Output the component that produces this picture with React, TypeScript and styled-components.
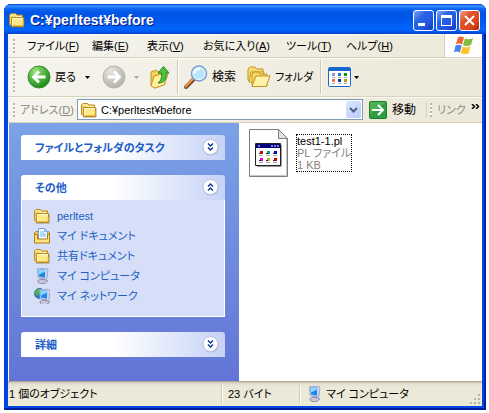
import React, { useState } from "react";
import styled, { createGlobalStyle } from "styled-components";

const GlobalStyle = createGlobalStyle`
  * { box-sizing: border-box; }
  body {
    margin: 0;
    background: #fff;
    color: #000;
    font: 11px/16px "Liberation Sans", "Noto Sans CJK JP", sans-serif;
    font-feature-settings: "palt";
  }
  button, input { font: inherit; font-feature-settings: inherit; color: inherit; }
  button { margin: 0; padding: 0; border: 0; background: none; white-space: nowrap; }
  svg { display: block; flex: none; }
`;

const Page = styled.div`
  display: flex;
  min-height: 100vh;
  padding: 4px 3px 3px 4px;
`;
const Window = styled.main`
  flex: 1;
  min-width: 0;
  display: flex;
  flex-direction: column;
  padding: 0 4px 4px;
  border-radius: 7px 7px 0 0;
  background: #0046e0;
  box-shadow: inset 1px 0 #0831d9, inset -2px -2px #001ea0;
`;
const TitleBar = styled.header`
  display: flex;
  align-items: center;
  gap: 5px;
  height: 30px;
  margin: 0 -4px;
  padding: 2px 6px 0 5px;
  border-radius: 7px 7px 0 0;
  background: linear-gradient(#0040cc 0, #3a92ff 2px, #0a62f0 5px, #0055e5 9px, #0058ee 17px, #0066ff 25px, #005cf5 27px, #0040c8 30px);
`;
const Title = styled.h1`
  flex: 1;
  margin: 0;
  color: #fff;
  font-size: 14px;
  line-height: 16px;
  text-shadow: 1px 1px #0a1883;
`;
const Captions = styled.div`
  display: flex;
  gap: 2px;
`;
const CaptionButton = styled.button<{ $close?: boolean }>`
  width: 21px;
  height: 21px;
  border: 1px solid #fff;
  border-radius: 3px;
  background: ${(p) =>
    p.$close
      ? "linear-gradient(135deg, #f0a58c, #e0512c 35%, #dc4a22 65%, #b42a08)"
      : "linear-gradient(135deg, #7ea6f8, #2a62e6 35%, #2458e0 65%, #1438b0)"};
`;
const Bar = styled.div<{ $height: number }>`
  display: flex;
  align-items: center;
  height: ${(p) => p.$height}px;
  padding-left: 5px;
  background: linear-gradient(90deg, #f5f4ee, #ece9d8);
  border-bottom: 1px solid #d8d2bd;
  box-shadow: inset 0 1px #fbfaf6;
  overflow: hidden;
`;
const Grip = styled.span<{ $height: number }>`
  flex: none;
  width: 2px;
  height: ${(p) => p.$height}px;
  background: repeating-linear-gradient(#bcb8a6 0 2px, #fbfaf6 2px 4px);
`;
const Menus = styled.nav`
  flex: 1;
  display: flex;
  gap: 16px;
  padding-left: 12px;
`;
const MenuButton = styled.button<{ $width: number }>`
  width: ${(p) => p.$width}px;
  text-align: left;
`;
const FlagBox = styled.div`
  display: flex;
  align-items: center;
  justify-content: center;
  width: 38px;
  height: 100%;
  background: #fff;
  border-left: 1px solid #d8d2bd;
`;
const ToolButton = styled.button<{ $gap: number; $left: number }>`
  display: flex;
  align-items: center;
  gap: ${(p) => p.$gap}px;
  margin-left: ${(p) => p.$left}px;
`;
const Separator = styled.span<{ $left: number }>`
  flex: none;
  width: 2px;
  height: 34px;
  margin-left: ${(p) => p.$left}px;
  border-left: 1px solid #cbc7b4;
  border-right: 1px solid #fff;
`;
const ToolText = styled.span<{ $width: number; $large?: boolean }>`
  width: ${(p) => p.$width}px;
  font-size: ${(p) => (p.$large ? 12 : 11)}px;
  text-align: left;
`;
const AddressLabel = styled.label`
  flex: none;
  width: 62px;
  padding-left: 5px;
  color: #8b897c;
  white-space: nowrap;
`;
const AddressField = styled.div`
  flex: 1;
  min-width: 0;
  display: flex;
  align-items: center;
  gap: 4px;
  height: 21px;
  padding: 0 1px 0 3px;
  border: 1px solid #7f9db9;
  background: #fff;
`;
const AddressInput = styled.input`
  flex: 1;
  min-width: 0;
  padding: 0;
  border: 0;
  outline: 0;
  background: none;
`;
const DropButton = styled.button`
  display: flex;
  align-items: center;
  justify-content: center;
  width: 15px;
  height: 17px;
  border-radius: 2px;
  background: linear-gradient(135deg, #dce6fe, #b6cbf8);
`;
const Links = styled.div`
  display: flex;
  align-items: center;
  gap: 5px;
  flex: none;
  width: 56px;
  margin-left: 10px;
  padding-left: 3px;
  border-left: 1px solid #d8d2bd;
  color: #8b897c;
  white-space: nowrap;
`;
const More = styled.button`
  margin: 0 4px 6px auto;
`;
const Content = styled.div`
  flex: 1;
  display: flex;
  border-left: 1px solid #fff;
  background: #fff;
`;
const Sidebar = styled.aside`
  flex: none;
  display: flex;
  flex-direction: column;
  gap: 15px;
  width: 230px;
  padding: 12px 14px 12px 12px;
  background: linear-gradient(#7ba2e7, #6375d6);
`;
const PanelHeader = styled.button`
  display: flex;
  align-items: center;
  justify-content: space-between;
  width: 100%;
  height: 25px;
  padding: 0 6px 0 14px;
  border-radius: 3px 3px 0 0;
  background: linear-gradient(90deg, #fff 45%, #c6d3f7);
  color: #215dc6;
  font-weight: bold;
`;
const PanelBody = styled.ul`
  margin: 0;
  padding: 6px 0 10px 12px;
  border: solid #fff;
  border-width: 0 1px 1px;
  background: #d6dff7;
  list-style: none;
`;
const TaskLink = styled.a`
  display: flex;
  align-items: center;
  gap: 7px;
  height: 20px;
  color: #215dc6;
  text-decoration: none;
  white-space: nowrap;
`;
const Files = styled.section`
  flex: 1;
  padding: 6px 10px;
`;
const FileItem = styled.button`
  display: flex;
  align-items: center;
  gap: 8px;
`;
const FileText = styled.span`
  display: block;
  border: 1px dotted #000;
  line-height: 12px;
  text-align: left;
`;
const FileLine = styled.span<{ $muted?: boolean }>`
  display: block;
  color: ${(p) => (p.$muted ? "#85837a" : "#000")};
`;
const StatusBar = styled.footer`
  display: flex;
  height: 25px;
  padding-top: 4px;
  background: linear-gradient(#8f8c7c 0, #c9c6b6 1px, #e4e1d0 3px, #ece9d8 6px);
`;
const StatusPane = styled.div<{ $width?: number; $first?: boolean }>`
  display: flex;
  align-items: center;
  gap: 4px;
  flex: ${(p) => (p.$width ? `0 0 ${p.$width}px` : "1")};
  height: 18px;
  padding-left: ${(p) => (p.$first ? 1 : 5)}px;
  border-right: ${(p) => (p.$width ? "1px solid #fff" : "0")};
  box-shadow: ${(p) => (p.$width ? "inset -1px 0 #cfcbb8" : "none")};
  white-space: nowrap;
`;
const SizeGrip = styled.span`
  display: flex;
  align-items: flex-end;
  padding: 0 1px 1px 0;
`;

const Folder = () => (
  <svg width="16" height="16" viewBox="0 0 16 16" aria-hidden="true">
    <path d="M2 15.2h13l.8-.8V6" fill="none" stroke="#77705c" strokeOpacity=".5" />
    <path d="M.5 12.5V3L2 1.500h4.500L8 3h5.500v10H1z" fill="#f7d567" stroke="#b98a1d" />
    <path d="M2 3h4l1 1.500h5.500" fill="none" stroke="#fff6bf" />
    <path d="M2.500 5.500h12v9h-12z" fill="#ffe88a" stroke="#b98a1d" />
    <path d="M3.500 6.500h10.500M3.500 7v6" fill="none" stroke="#fffbd9" />
    <path d="M4 13.500h10V9" fill="none" stroke="#eebf47" />
  </svg>
);
const Documents = () => (
  <svg width="16" height="16" viewBox="0 0 16 16" aria-hidden="true">
    <path d="M.5 14.500V5L2 3.500h12.500l1 1.500v9.500z" fill="#f0c251" stroke="#ad7d18" />
    <path d="M4.500.500h6l3 3v9h-9z" fill="#f8fcff" stroke="#6ba2d6" />
    <path d="M10.500.500v3h3M6 4h4M6 6h6M6 8h6" fill="none" stroke="#73b4e8" />
    <path d="M.5 15V6.500h3V11h10V6.500h2V15z" fill="#ffe282" stroke="#ad7d18" />
  </svg>
);
const Monitor = ({ x = 0, y = 0 }: { x?: number; y?: number }) => (
  <g transform={`translate(${x} ${y})`}>
    <path d="M3 12.500 6 11l6 1 .5 1.500-3 2H5L3 14z" fill="#c8c6dc" stroke="#77758f" strokeWidth=".7" />
    <path d="m5 9.500 5 1v2l-4-1z" fill="#9290b5" />
    <path d="m2.500.800 8-.5 2.500 1-1 9-1.500 1L3 9.500z" fill="#d0d7ee" stroke="#8b93bb" strokeWidth=".7" />
    <path d="m3.200 1.700 7-.5-.2 8.500-6-1.300z" fill="#1d88e8" />
    <path d="m3.200 1.700 7-.5V4C7.500 4 6.500 5.500 4 6.500z" fill="#8dd6ff" />
  </g>
);
const Computer = () => (
  <svg width="16" height="16" viewBox="0 0 16 16" aria-hidden="true"><Monitor x={1} /></svg>
);
const Network = () => (
  <svg width="16" height="16" viewBox="0 0 16 16" aria-hidden="true">
    <circle cx="5.500" cy="5.500" r="5" fill="#2679cf" stroke="#19558f" strokeWidth=".7" />
    <path d="M1.500 3 4 1l4 .5-1 2-2 .5L4.500 7 2 7.500.8 5z" fill="#55b83c" />
    <Monitor x={3} y={1} />
  </svg>
);
const Flag = () => (
  <svg width="20" height="19" viewBox="0 0 20 19" aria-hidden="true">
    <path d="M4 1.500C6-.3 8 .4 10 1.500L8 8.600C6 7.200 4 7.200 1.800 8.400z" fill="#f26532" />
    <path d="M11 2.200c2 1.100 5 1.500 8-.2l-2 7c-3 1.300-6 1.200-8-.1z" fill="#80bd3f" />
    <path d="M1.500 9.600c2.500-1.200 4.500-1.100 6.200.2L5.800 16.500C4 15.200 2 15.300 0 16.300z" fill="#4d82e5" />
    <path d="M8.700 10.400c2.500 1.200 5 1.300 8-.1l-2 7c-3 1.300-6 1.300-8-.2z" fill="#fcc32b" />
  </svg>
);
const Arrow = ({ faded }: { faded?: boolean }) => (
  <svg width="5" height="3" viewBox="0 0 5 3" aria-hidden="true">
    <path d="M0 0h5L2.500 3z" fill={faded ? "#aaa89d" : "#000"} />
  </svg>
);
const RoundArrow = ({ forward }: { forward?: boolean }) => (
  <svg width="24" height="24" viewBox="0 0 24 24" aria-hidden="true">
    <defs>
      <radialGradient id={forward ? "gray" : "green"} cx=".35" cy=".25" r=".85">
        <stop offset="0" stopColor={forward ? "#e6e5e0" : "#a4e183"} />
        <stop offset=".5" stopColor={forward ? "#c8c7c1" : "#4cb43c"} />
        <stop offset="1" stopColor={forward ? "#b0afa9" : "#177a18"} />
      </radialGradient>
    </defs>
    <circle cx="12" cy="12" r="11" fill={`url(#${forward ? "gray" : "green"})`} stroke={forward ? "#b5b4ad" : "#368f2d"} />
    <path d={forward ? "M5.500 12H17M12 6.500l5.500 5.500-5.500 5.500" : "M18.500 12H7M12 6.500 6.500 12l5.500 5.500"} fill="none" stroke="#fff" strokeWidth="2.800" />
  </svg>
);
const UpFolder = () => (
  <svg width="20" height="24" viewBox="0 0 20 24" aria-hidden="true">
    <path d="M1 20V7l5-2 2 2 6-1 1 13-10 4z" fill="#f5d15c" stroke="#c39421" />
    <path d="m1 21 3-10 11-3 3 1-4 11-9 3z" fill="#ffef9e" stroke="#c39421" />
    <path d="M8 18c3-2 4-5 3.500-10H8l5.500-6.500L19 8h-3c1 6-2 10-8 10z" fill="#4fc43e" stroke="#238424" />
  </svg>
);
const Search = () => (
  <svg width="24" height="24" viewBox="0 0 24 24" aria-hidden="true">
    <path d="M10 14 2 22" stroke="#7c4b25" strokeWidth="4" strokeLinecap="round" />
    <path d="m9.500 13.500-8 8" stroke="#e99b58" strokeWidth="2" strokeLinecap="round" />
    <circle cx="15" cy="8.500" r="7.500" fill="#cceeff" stroke="#769cd6" strokeWidth="1.500" />
    <circle cx="15" cy="8.500" r="6" fill="#b9e5fb" stroke="#eefaff" />
    <path d="M11 8c0-3 2-4 5-4" fill="none" stroke="#fff" strokeWidth="2" />
  </svg>
);
const Folders = () => (
  <svg width="24" height="22" viewBox="0 0 24 22" aria-hidden="true">
    <path d="M1 14V3l2-2h5l2 2h6v12H2z" fill="#f9db70" stroke="#c59422" />
    <path d="m2 16 2-10h13l-3 10z" fill="#ffeb91" stroke="#c59422" />
    <path d="M5 19V8l2-2h5l1 2h7v12H6z" fill="#f9d763" stroke="#c59422" />
    <path d="m5 20.500 4-10.500h14l-4 10.500H6z" fill="#fff2a9" stroke="#c59422" />
  </svg>
);
const Views = () => (
  <svg width="23" height="20" viewBox="0 0 23 20" aria-hidden="true">
    <rect x=".5" y=".5" width="22" height="19" rx="1" fill="#fff" stroke="#1765cd" />
    <path d="M1 1h21v3H1z" fill="#1765cd" />
    {["#a090ca", "#2479db", "#079b0b", "#fa7546", "#073b9b", "#c39b00"].map((color, i) => (
      <g key={color} fill={color}>
        <rect x={4 + (i % 3) * 6} y={i < 3 ? 6 : 12} width="3" height="3" />
        <rect x={4 + (i % 3) * 6} y={i < 3 ? 10 : 16} width="3" height="1" fill="#aaa" />
      </g>
    ))}
  </svg>
);
const Go = () => (
  <svg width="18" height="18" viewBox="0 0 18 18" aria-hidden="true">
    <rect x=".5" y=".5" width="17" height="17" rx="1" fill="#2f9e3f" stroke="#1d7b2e" />
    <path d="M1 1h16L1 13z" fill="#70c26a" opacity=".5" />
    <path d="M3 9h11M9 4l5 5-5 5" fill="none" stroke="#fff" strokeWidth="2" />
  </svg>
);
const Chevrons = ({ open }: { open?: boolean }) => (
  <svg width="17" height="17" viewBox="0 0 17 17" aria-hidden="true">
    <circle cx="9" cy="9" r="7.500" fill="#909cc5" opacity=".6" />
    <circle cx="8.500" cy="8" r="7.500" fill="#fff" stroke="#b6bfdc" />
    <path d={open ? "m6 7.500 2.500-2.500L11 7.500m-5 4L8.500 9l2.500 2.500" : "M6 4.500 8.500 7 11 4.500m-5 4L8.500 11 11 8.500"} fill="none" stroke="#103995" strokeWidth="1.500" />
  </svg>
);
const ScriptFile = () => (
  <svg width="39" height="48" viewBox="0 0 39 48" aria-hidden="true">
    <path d="M.5.500h29l9 9v38H.500z" fill="#fff" stroke="#7e7e7e" />
    <path d="M37.500 10v36.500H1" fill="none" stroke="#c6c6c6" />
    <path d="M29.500.500v9h9z" fill="#e2e2e2" stroke="#7e7e7e" />
    <path d="M6.500 14.500h25v22h-25z" fill="#fff" stroke="#222" />
    <path d="M7 15h24v4H7z" fill="#000080" />
    <path d="M9 17h2m11 0h2m1 0h2m1 0h2" stroke="#fff" />
    <path d="M32.500 16v21.500H8" fill="none" stroke="#999" />
    {["#e00000", "#009c9c", "#0000cb", "#ed00e5", "#c3b200", "#d50000"].map((color, i) => (
      <g key={i} transform={`translate(${10 + (i % 3) * 7} ${i < 3 ? 22 : 29})`}>
        <path d="M1 0h3v3H1z" fill={color} />
        <path d="M0 2h2v1H0z" fill="#222" />
        <path d="M0 4h4v1H0z" fill="#aaa" />
      </g>
    ))}
  </svg>
);

const menus = [
  { name: "ファイル", key: "F", width: 49 },
  { name: "編集", key: "E", width: 39 },
  { name: "表示", key: "V", width: 40 },
  { name: "お気に入り", key: "A", width: 67 },
  { name: "ツール", key: "T", width: 44 },
  { name: "ヘルプ", key: "H", width: 45 },
];
const places = [
  { name: "perltest", icon: <Folder /> },
  { name: "マイ ドキュメント", icon: <Documents /> },
  { name: "共有ドキュメント", icon: <Folder /> },
  { name: "マイ コンピュータ", icon: <Computer /> },
  { name: "マイ ネットワーク", icon: <Network /> },
];

export default function App() {
  const [address, setAddress] = useState("C:¥perltest¥before");
  return (
    <Page>
      <GlobalStyle />
      <Window>
        <TitleBar>
          <Folder />
          <Title>C:¥perltest¥before</Title>
          <Captions>
            <CaptionButton aria-label="最小化">
              <svg width="19" height="19"><path d="M4 12h7v3H4z" fill="#fff" /></svg>
            </CaptionButton>
            <CaptionButton aria-label="最大化">
              <svg width="19" height="19"><path d="M4 4h11v11H4zM5 7v7h9V7z" fill="#fff" fillRule="evenodd" /></svg>
            </CaptionButton>
            <CaptionButton $close aria-label="閉じる">
              <svg width="19" height="19"><path d="m5 5 9 9m0-9-9 9" stroke="#fff" strokeWidth="2" /></svg>
            </CaptionButton>
          </Captions>
        </TitleBar>
        <Bar $height={24}>
          <Grip $height={14} />
          <Menus>
            {menus.map((menu) => (
              <MenuButton key={menu.key} $width={menu.width}>
                {menu.name}(<u>{menu.key}</u>)
              </MenuButton>
            ))}
          </Menus>
          <FlagBox><Flag /></FlagBox>
        </Bar>
        <Bar $height={39}>
          <Grip $height={30} />
          <ToolButton $left={12} $gap={4}>
            <RoundArrow /><ToolText $width={26}>戻る</ToolText><Arrow />
          </ToolButton>
          <ToolButton $left={12} $gap={8} aria-label="進む"><RoundArrow forward /><Arrow faded /></ToolButton>
          <ToolButton $left={11} $gap={0} aria-label="上へ"><UpFolder /></ToolButton>
          <Separator $left={7} />
          <ToolButton $left={5} $gap={4}><Search /><ToolText $large $width={26}>検索</ToolText></ToolButton>
          <ToolButton $left={9} $gap={4}><Folders /><ToolText $width={38}>フォルダ</ToolText></ToolButton>
          <Separator $left={7} />
          <ToolButton $left={6} $gap={3} aria-label="表示"><Views /><Arrow /></ToolButton>
        </Bar>
        <Bar $height={26}>
          <Grip $height={14} />
          <AddressLabel htmlFor="address">アドレス(<u>D</u>)</AddressLabel>
          <AddressField>
            <Folder />
            <AddressInput id="address" value={address} onChange={(e) => setAddress(e.target.value)} />
            <DropButton aria-label="履歴">
              <svg width="9" height="6" viewBox="0 0 9 6"><path d="m1 1 3.500 3.500L8 1" fill="none" stroke="#4d6185" strokeWidth="2" /></svg>
            </DropButton>
          </AddressField>
          <ToolButton $left={6} $gap={5}><Go /><ToolText $large $width={24}>移動</ToolText></ToolButton>
          <Links>
            <Grip $height={14} />リンク
            <More aria-label="その他のリンク">
              <svg width="9" height="5" viewBox="0 0 9 5"><path d="m1 0 2.500 2.500L1 5m4-5 2.500 2.500L5 5" fill="none" stroke="#000" strokeWidth="1.500" /></svg>
            </More>
          </Links>
        </Bar>
        <Content>
          <Sidebar>
            <PanelHeader>ファイルとフォルダのタスク<Chevrons /></PanelHeader>
            <div>
              <PanelHeader>その他<Chevrons open /></PanelHeader>
              <PanelBody>
                {places.map((place) => (
                  <li key={place.name}>
                    <TaskLink href="#">{place.icon}{place.name}</TaskLink>
                  </li>
                ))}
              </PanelBody>
            </div>
            <PanelHeader>詳細<Chevrons /></PanelHeader>
          </Sidebar>
          <Files>
            <FileItem>
              <ScriptFile />
              <FileText>
                <FileLine>test1-1.pl</FileLine>
                <FileLine $muted>PL ファイル</FileLine>
                <FileLine $muted>1 KB</FileLine>
              </FileText>
            </FileItem>
          </Files>
        </Content>
        <StatusBar>
          <StatusPane $first $width={215}>1 個のオブジェクト</StatusPane>
          <StatusPane $width={78}>23 バイト</StatusPane>
          <StatusPane><Computer />マイ コンピュータ</StatusPane>
          <SizeGrip>
            <svg width="12" height="12" viewBox="0 0 12 12" aria-hidden="true">
              <path d="M9 1h2v2H9zM5 5h2v2H5zM9 5h2v2H9zM1 9h2v2H1zM5 9h2v2H5zM9 9h2v2H9z" fill="#b9b5a2" />
            </svg>
          </SizeGrip>
        </StatusBar>
      </Window>
    </Page>
  );
}
